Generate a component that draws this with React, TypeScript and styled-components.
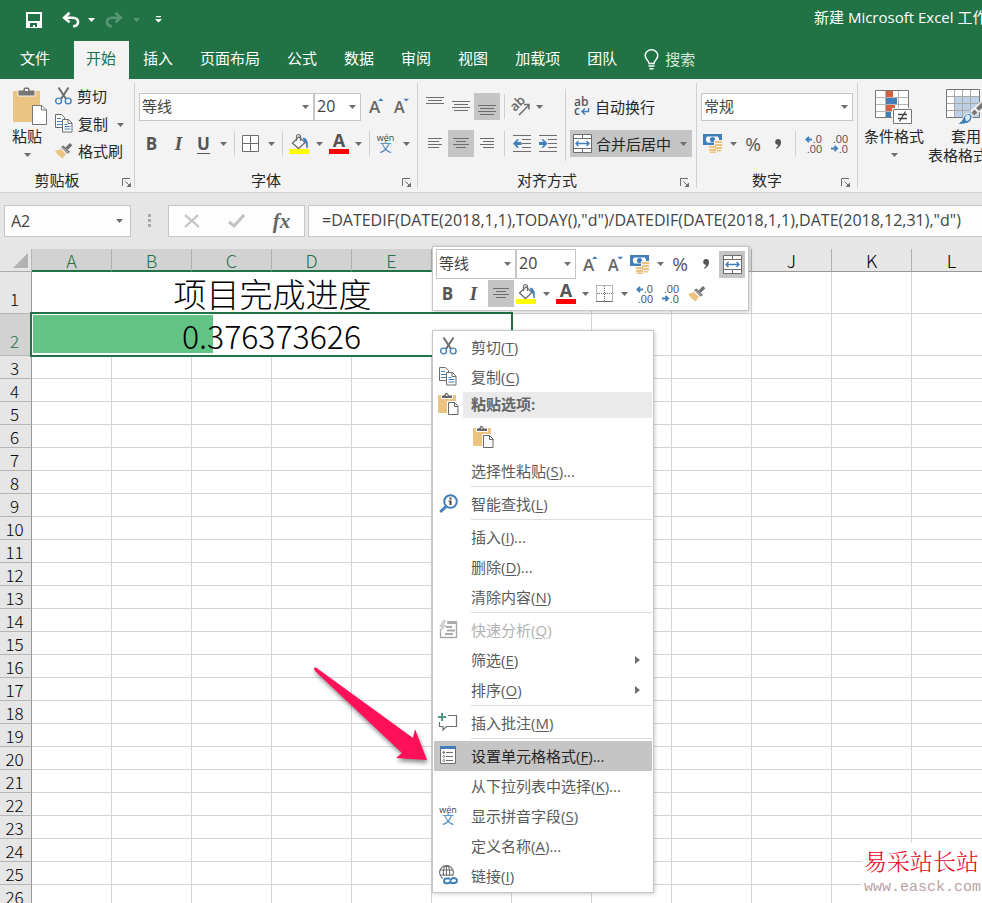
import React from 'react';
import styled, { createGlobalStyle, css } from 'styled-components';

const GREEN = '#217346';
const GREY = '#6d6d6d';
const BLUE = '#427fb9';
const TAN = '#ebc481';
const UI = '"Open Sans", "Noto Sans CJK SC", sans-serif';
const SHEET = '"Noto Sans CJK SC", "Open Sans", sans-serif';

const GlobalStyle = createGlobalStyle`
  *, *::before, *::after { box-sizing: border-box; }
  html, body, #root { height: 100%; }
  body { margin: 0; overflow: hidden; font-family: ${UI}; font-size: 15px; line-height: 20px; color: #262626; background: #fff; }
  button, input, select { font: inherit; color: inherit; margin: 0; padding: 0; border: 0; background: none; border-radius: 0; }
  button { display: inline-flex; align-items: center; justify-content: center; white-space: nowrap; }
  svg { display: block; flex: none; overflow: visible; }
`;

const Shell = styled.div`
  position: relative;
  display: flex;
  flex-direction: column;
  height: 100vh;
  overflow: hidden;
  background: #e6e6e6;
`;

/* ---------- Title bar and tabs ---------- */

const TitleBar = styled.header`
  display: flex;
  align-items: center;
  justify-content: space-between;
  height: 41px;
  flex: none;
  background: ${GREEN};
  color: #fff;
`;
const QuickAccess = styled.div`
  display: flex;
  align-items: center;
  padding: 0 0 2px 25px;
`;
const QuickButton = styled.button<{ $w: number; $dim?: boolean }>`
  width: ${p => p.$w}px;
  height: 24px;
  color: #fff;
  opacity: ${p => (p.$dim ? 0.25 : 1)};
`;
const Spacer = styled.span`
  width: 14px;
`;
const DocTitle = styled.h1`
  margin: 0;
  width: 168px;
  padding-bottom: 7px;
  font-size: 15px;
  font-weight: 400;
  line-height: 22px;
  white-space: nowrap;
  overflow: hidden;
`;
const Tabs = styled.nav`
  display: flex;
  height: 38px;
  flex: none;
  background: ${GREEN};
  color: #fff;
`;
const Tab = styled.button<{ $active?: boolean; $file?: boolean }>`
  height: 38px;
  padding: 0 13px 4px 14px;
  color: #fff;
  ${p => p.$file && css`padding: 0 24px 4px 20px;`}
  ${p => p.$active && css`padding: 0 13px 4px 12px; background: #f3f3f3; color: ${GREEN};`}
`;
const SearchTab = styled.button`
  gap: 6px;
  padding: 0 0 2px 14px;
  color: #d8e8df;
`;

/* ---------- Ribbon ---------- */

const Ribbon = styled.section`
  display: flex;
  flex: none;
  height: 114px;
  padding: 4px 0;
  background: #f3f3f3;
  border-bottom: 1px solid #d0d0d0;
  overflow: hidden;
`;
const Group = styled.div<{ $pad: number }>`
  display: flex;
  flex: none;
  flex-direction: column;
  justify-content: space-between;
  padding: 0 ${p => p.$pad}px;
  border-right: 1px solid #d0d0d0;
`;
const GroupBody = styled.div<{ $end?: number }>`
  display: flex;
  padding-right: ${p => p.$end ?? 0}px;
`;
const Stack = styled.div<{ $top?: number; $gap?: number }>`
  display: flex;
  flex-direction: column;
  gap: ${p => p.$gap ?? 0}px;
  padding-top: ${p => p.$top ?? 0}px;
`;
const Row = styled.div<{ $gap?: number; $h?: number; $left?: number }>`
  display: flex;
  align-items: center;
  gap: ${p => p.$gap ?? 0}px;
  height: ${p => p.$h ?? 27}px;
  padding-left: ${p => p.$left ?? 0}px;
`;
const GroupFooter = styled.div`
  display: flex;
  align-items: center;
  height: 20px;
  margin-bottom: -2px;
`;
const GroupLabel = styled.span`
  flex: 1;
  text-align: center;
`;
const Launcher = styled.button`
  width: 14px;
  height: 16px;
  padding: 4px 2px 0 0;
  margin-left: 6px;
`;
const Tool = styled.button<{ $w: number; $on?: boolean }>`
  width: ${p => p.$w}px;
  height: 27px;
  flex: none;
  background: ${p => (p.$on ? '#c5c5c5' : 'transparent')};
`;
const Glyph = styled.span<{ $kind: 'b' | 'i' | 'u' | 'pct' }>`
  color: #555;
  font-weight: 700;
  font-size: 17px;
  line-height: 20px;
  ${p => p.$kind === 'i' && css`font-family: "Liberation Serif", serif; font-style: italic; font-size: 19px;`}
  ${p => p.$kind === 'u' && css`text-decoration: underline; text-decoration-thickness: 1px; text-underline-offset: 3px;`}
  ${p => p.$kind === 'pct' && css`font-weight: 400; font-size: 19px;`}
`;
const Divider = styled.span<{ $m: number; $tall?: boolean }>`
  width: 1px;
  height: ${p => (p.$tall ? 72 : 25)}px;
  margin: ${p => (p.$tall ? 6 : 0)}px ${p => p.$m}px 0;
  background: #cfcfcf;
`;
const PasteButton = styled.button`
  flex-direction: column;
  justify-content: flex-start;
  width: 54px;
  height: 80px;
  padding-top: 4px;
  svg:first-child { margin-left: 6px; }
`;
const PasteLabel = styled.span`
  padding-bottom: 7px;
`;
const TextTool = styled.button<{ $on?: boolean }>`
  width: 122px;
  height: 27px;
  padding-left: 3px;
  justify-content: flex-start;
  gap: 4px;
  background: ${p => (p.$on ? '#c5c5c5' : 'transparent')};
`;
const ClipRow = styled.button`
  height: 28px;
  justify-content: flex-start;
  gap: 5px;
  padding: 0 0 2px 1px;
`;
const Caret = styled.span`
  display: inline-flex;
  align-items: center;
  justify-content: center;
  width: 16px;
`;
const ClipCaret = styled.button`
  width: 16px;
  height: 20px;
  margin-left: 4px;
`;
const BigTool = styled.button<{ $w: number }>`
  flex-direction: column;
  justify-content: flex-start;
  width: ${p => p.$w}px;
  height: 86px;
  padding-top: 6px;
  flex: none;
`;
const BigLabel = styled.span`
  display: flex;
  align-items: center;
  height: 19px;
`;
const Picture = styled.span`
  display: flex;
  height: 37px;
`;

const PickerBox = styled.label<{ $w: number; $h: number }>`
  display: grid;
  align-items: center;
  flex: none;
  width: ${p => p.$w}px;
  height: ${p => p.$h}px;
  background: #fff;
  border: 1px solid #c6c6c6;
  & > * { grid-area: 1 / 1; }
  & > svg { justify-self: end; margin-right: 4px; pointer-events: none; }
`;
const Picker = styled.select<{ $numeric: boolean }>`
  appearance: none;
  width: 100%;
  height: 100%;
  padding: 0 0 2px 2px;
  font-size: ${p => (p.$numeric ? 16 : 15)}px;
  color: #444;
`;
const Wen = styled.span`
  display: flex;
  flex-direction: column;
  align-items: center;
  font-size: 9px;
  line-height: 9px;
  color: #444;
`;
const WenHan = styled.span`
  font-size: 12px;
  line-height: 12px;
  color: ${BLUE};
`;

/* ---------- Formula bar ---------- */

const FormulaBar = styled.section`
  display: flex;
  flex: none;
  align-items: center;
  height: 56px;
  padding-left: 4px;
`;
const NameBox = styled.label`
  display: flex;
  align-items: center;
  width: 127px;
  height: 32px;
  padding: 0 7px 0 6px;
  background: #fdfdfd;
  border: 1px solid #c6c6c6;
`;
const NameInput = styled.input`
  width: 100%;
  min-width: 0;
  font-size: 16px;
  color: #444;
`;
const Dots = styled.span`
  display: flex;
  justify-content: center;
  width: 37px;
`;
const FormulaTools = styled.div`
  display: flex;
  align-items: center;
  width: 137px;
  height: 32px;
  margin-right: 3px;
  background: #fdfdfd;
  border: 1px solid #c6c6c6;
`;
const FormulaTool = styled.button`
  flex: 1;
  height: 30px;
`;
const Fx = styled.span`
  font-family: "Liberation Serif", serif;
  font-style: italic;
  font-weight: 700;
  font-size: 21px;
  color: #666;
`;
const FormulaInput = styled.input`
  flex: 1;
  min-width: 0;
  height: 32px;
  padding: 0 0 2px 13px;
  background: #fdfdfd;
  border: 1px solid #c6c6c6;
  border-right: 0;
  font-size: 16px;
  color: #444;
`;

/* ---------- Sheet ---------- */

const SheetArea = styled.main`
  flex: 1;
  min-height: 0;
  overflow: hidden;
`;
const Grid = styled.table`
  table-layout: fixed;
  width: 992px;
  border-spacing: 0;
  background: #fff;
  font-family: ${SHEET};
  font-weight: 300;
  color: #000;
`;
const Col = styled.col<{ $w: number }>`
  width: ${p => p.$w}px;
`;
const Corner = styled.td`
  height: 23px;
  padding: 0 3px 3px 0;
  background: #e6e6e6;
  border-right: 1px solid #b5b5b5;
  border-bottom: 1px solid #ababab;
  vertical-align: bottom;
  svg { margin-left: auto; }
`;
const ColHead = styled.th<{ $sel: boolean }>`
  height: 23px;
  padding: 0;
  font-size: 18px;
  font-weight: 300;
  line-height: 20px;
  background: ${p => (p.$sel ? '#d2d2d2' : '#e6e6e6')};
  color: ${p => (p.$sel ? GREEN : '#000')};
  border-right: 1px solid #b0b0b0;
  border-bottom: ${p => (p.$sel ? `2px solid ${GREEN}` : '1px solid #999')};
`;
const RowHead = styled.th<{ $sel: boolean; $tall: boolean }>`
  height: ${p => (p.$tall ? 42 : 23)}px;
  padding: 0 2px ${p => (p.$tall ? 4 : 0)}px 0;
  font-size: 17px;
  font-weight: 300;
  line-height: 20px;
  vertical-align: bottom;
  background: ${p => (p.$sel ? '#d2d2d2' : '#e6e6e6')};
  color: ${p => (p.$sel ? GREEN : '#000')};
  border-right: 1px solid #999;
  border-bottom: 1px solid #b5b5b5;
`;
const Cell = styled.td`
  padding: 0;
  border-right: 1px solid #d4d4d4;
  border-bottom: 1px solid #d4d4d4;
`;
const TitleCell = styled(Cell)`
  font-size: 33px;
  line-height: 40px;
  text-align: center;
  padding-left: 2px;
`;
const SelectedCell = styled(Cell)`
  position: relative;
  font-size: 32px;
  line-height: 40px;
  text-align: center;
  padding-top: 1px;
  &::after {
    content: '';
    position: absolute;
    inset: -2px;
    border: 2px solid ${GREEN};
  }
`;
const DataBar = styled.span`
  position: absolute;
  left: 1px;
  top: 1px;
  bottom: 2px;
  background: #63c384;
`;
const CellValue = styled.span`
  position: relative;
`;

/* ---------- Floating layers ---------- */

const floating = css`
  position: absolute;
  background: #fff;
  border: 1px solid #c6c6c6;
  box-shadow: 1px 1px 4px rgba(0, 0, 0, 0.2);
`;
const MiniToolbar = styled.div`
  ${floating}
  left: 432px;
  top: 246px;
  padding: 2px 3px;
`;
const Menu = styled.div`
  ${floating}
  left: 432px;
  top: 330px;
  width: 222px;
  padding: 1px;
`;
const MenuItem = styled.button<{ $on?: boolean; $off?: boolean }>`
  display: flex;
  justify-content: flex-start;
  width: 100%;
  height: 30px;
  color: ${p => (p.$off ? '#b1b1b1' : p.$on ? '#262626' : '#5a5a5a')};
  background: ${p => (p.$on ? '#c5c5c5' : 'transparent')};
`;
const MenuIcon = styled.span`
  display: flex;
  justify-content: center;
  flex: none;
  width: 29px;
  padding: 0 1px 2px 0;
`;
const MenuText = styled.span`
  flex: 1;
  padding-left: 8px;
  padding-bottom: 1px;
  text-align: left;
  u { text-underline-offset: 2px; text-decoration-thickness: 1px; }
`;
const MenuArrow = styled.span`
  padding-right: 12px;
`;
const MenuHeader = styled.div`
  display: flex;
  align-items: center;
  height: 26px;
`;
const MenuHeading = styled.span`
  flex: 1;
  height: 26px;
  padding-left: 8px;
  line-height: 25px;
  font-weight: 700;
  color: #666;
  background: #eaeaea;
`;
const PasteOptions = styled.div`
  display: flex;
  align-items: center;
  height: 38px;
  padding: 0 0 0 39px;
`;
const MenuRule = styled.hr`
  height: 1px;
  margin: 0 0 2px 37px;
  border: 0;
  background: #dcdcdc;
`;
const Pointer = styled.svg`
  position: absolute;
  left: 310px;
  top: 664px;
  filter: drop-shadow(1px 3px 2px rgba(0, 0, 0, 0.45));
`;
const Watermark = styled.div`
  position: absolute;
  right: 0;
  bottom: 0;
  width: 120px;
  height: 60px;
  padding: 3px 0 0 2px;
  background: #fff;
  white-space: nowrap;
  overflow: hidden;
`;
const WatermarkName = styled.div`
  font-family: "Noto Serif CJK SC", "Noto Sans CJK SC", serif;
  font-weight: 300;
  font-size: 23px;
  line-height: 30px;
  color: #e8001c;
`;
const WatermarkUrl = styled.div`
  font-family: "Liberation Mono", monospace;
  font-size: 15px;
  line-height: 24px;
  color: #b9a3a3;
`;

/* ---------- Icons ---------- */

const Down = ({ c = GREY }: { c?: string }) => (
  <svg width="7" height="4" viewBox="0 0 7 4"><path d="M0 0h7L3.5 4z" fill={c} /></svg>
);

const SaveIcon = () => (
  <svg width="16" height="16" viewBox="0 0 16 16">
    <path d="M0 0h16v16H0z" fill="#fff" /><path d="M2 2h12v7H2z" fill={GREEN} />
    <path d="M4 11h7v4H9v-2H7v2H4z" fill={GREEN} />
  </svg>
);
const UndoIcon = ({ flip }: { flip?: boolean }) => (
  <svg width="18" height="16" viewBox="0 0 18 16" fill="none" stroke="#fff" strokeWidth="2.600">
    <g transform={flip ? 'translate(18 0) scale(-1 1)' : undefined}>
      <path d="M7.500 .8L2.200 5.700l5.300 4.500" /><path d="M2.500 5.700h8.200c7.200 0 7 8.600 .4 8.600" />
    </g>
  </svg>
);
const CustomizeIcon = () => (
  <svg width="7" height="7" viewBox="0 0 7 7" fill="#fff"><path d="M1 0h5v1.200H1zM0 3h7L3.500 6.500z" /></svg>
);
const BulbIcon = () => (
  <svg width="15" height="21" viewBox="0 0 15 21" fill="none" stroke="#fff" strokeWidth="1.500">
    <path d="M5 14.500c0-3-3.800-4-3.800-8a6.300 5.700 0 0 1 12.600 0c0 4-3.800 5-3.800 8z" /><path d="M4.500 17h6M5.500 19.800h4" />
  </svg>
);
const LauncherIcon = () => (
  <svg width="9" height="9" viewBox="0 0 9 9" fill="none" stroke={GREY}>
    <path d="M.5 8V.5H8M3.500 3.500L8 8" /><path d="M9 4.500V9H4.500z" fill={GREY} stroke="none" />
  </svg>
);
const PasteIcon = ({ big }: { big?: boolean }) => (
  <svg width={big ? 35 : 21} height={big ? 39 : 22} viewBox={big ? '0 0 35 39' : '0 0 21 22'}>
    {big ? (
      <>
        <path d="M1 4h26v31H0V5a1 1 0 0 1 1-1z" fill={TAN} />
        <path d="M5 3h5V2a2 2 0 0 1 2-2h3a2 2 0 0 1 2 2v1h5v6H5z" fill="#777" stroke="#f3f3f3" /><path d="M12 2h3v2h-3z" fill="#fff" />
        <path d="M19.500 18.500H29l4.500 4.500v14.500h-14z" fill="#fff" stroke="#777" /><path d="M28.500 18.500V23h5" fill="none" stroke="#777" />
      </>
    ) : (
      <>
        <path d="M1 2h17v18H1a1 1 0 0 1-1-1V3a1 1 0 0 1 1-1z" fill={TAN} />
        <path d="M3.500 2H6a2.500 2.500 0 0 1 5 0h3.500v3.500h-11z" fill="#666" stroke="#fff" /><path d="M8 1.500h1.500V3H8z" fill="#fff" />
        <path d="M9 8h12v14H9z" fill="#fff" /><path d="M10.500 9.500h6l3.500 3.500v8.500h-9.500z" fill="#fff" stroke="#666" /><path d="M16.500 9.500v4H20" fill="none" stroke="#666" />
      </>
    )}
  </svg>
);
const CutIcon = () => (
  <svg width="17" height="18" viewBox="0 0 17 18" fill="none">
    <path d="M3.500 .5l7.500 11.500M13.500 .5L6 12" stroke={GREY} strokeWidth="2" />
    <ellipse cx="3.600" cy="14" rx="2.900" ry="2.900" stroke={BLUE} strokeWidth="1.400" /><ellipse cx="13.200" cy="14" rx="2.900" ry="2.900" stroke={BLUE} strokeWidth="1.400" />
  </svg>
);
const CopyIcon = () => (
  <svg width="18" height="19" viewBox="0 0 18 19" stroke={GREY} fill="#fff">
    <path d="M.5 .5h6l3 3v10h-9z" /><path d="M2 4.500h4M2 7.500h5M2 10.500h5" stroke={BLUE} />
    <path d="M7.500 5.500h6l3.500 3.500v9H7.500z" /><path d="M13 5.500v4h4" fill="none" /><path d="M9.500 10.500h3M9.500 12.500h6M9.500 15h6" stroke={BLUE} />
  </svg>
);
const BrushIcon = () => (
  <svg width="18" height="16" viewBox="0 0 18 16">
    <path d="M0 8l6-2 5 5-3.500 4.500L3 12z" fill={TAN} /><path d="M6 4l2.500-1.500L15 9l-2.500 1.800z" fill="#707070" />
    <path d="M10.500 4.500L15 0l2.300 2.300-4.500 4.500z" fill="#707070" /><path d="M8 4.500l5 5" stroke="#f3f3f3" strokeWidth=".7" />
  </svg>
);
const BordersIcon = ({ dotted }: { dotted?: boolean }) => (
  <svg width="17" height="17" viewBox="0 0 17 17" fill="#fff" stroke={GREY} strokeDasharray={dotted ? '1 1' : undefined}>
    <path d="M.5 .5h16v16H.5zM8.500 1v15M1 8.500h15" />
    {dotted && <path d="M0 16.500h17" strokeDasharray="none" />}
  </svg>
);
const FillIcon = () => (
  <svg width="20" height="20" viewBox="0 0 20 20" fill="none">
    <path d="M0 15h20v5H0z" fill="#ff0" />
    <path d="M3.500 9L10 2.800l6 5.700-6.500 6z" fill="#fff" stroke={GREY} strokeWidth="1.300" />
    <path d="M7.500 7V2.500a2 2 0 0 1 4 0V7" stroke={GREY} strokeWidth="1.200" />
    <path d="M13.500 3.500c4 .5 6 3 5.300 10.500h-1.500c.2-3-.5-5-1.500-5.500z" fill={BLUE} />
  </svg>
);
const FontColorIcon = () => (
  <svg width="20" height="20" viewBox="0 0 20 20">
    <path d="M0 15h20v5H0z" fill="red" />
    <text x="10" y="13" textAnchor="middle" fontFamily="Open Sans" fontWeight="700" fontSize="18" fill="#555">A</text>
  </svg>
);
const SizeIcon = ({ up }: { up?: boolean }) => (
  <svg width="15" height="17" viewBox="0 0 15 17">
    <text x="0" y="15" fontFamily="Open Sans" fontWeight="600" fontSize={up ? 17 : 16} fill="#666">A</text>
    <path d={up ? 'M9 3h5.500L11.800 .3z' : 'M9.500 .8H15l-2.700 2.700z'} fill={BLUE} />
  </svg>
);
/* Each line is [x, width, y] inside a 27px tall button. */
const LINES: Record<string, number[][]> = {
  top: [[0, 18, 4], [2, 14, 7], [0, 18, 10]],
  middle: [[0, 18, 8], [2, 14, 11], [0, 18, 14], [2, 14, 17]],
  bottom: [[0, 18, 12], [2, 14, 15], [0, 18, 18], [2, 14, 21]],
  left: [[2, 14, 8], [2, 11, 11], [2, 14, 14], [2, 11, 17]],
  center: [[1, 16, 8], [4, 10, 11], [1, 16, 14], [4, 10, 17]],
  right: [[2, 14, 8], [5, 11, 11], [2, 14, 14], [5, 11, 17]],
};
const LinesIcon = ({ kind }: { kind: string }) => (
  <svg width="18" height="27" viewBox="0 0 18 27" fill={GREY}>
    {LINES[kind].map(([x, w, y]) => <rect key={y} x={x} y={y} width={w} height="1" />)}
  </svg>
);
const OrientIcon = () => (
  <svg width="20" height="18" viewBox="0 0 20 18">
    <text transform="translate(5 14) rotate(-45)" fontFamily="Open Sans" fontWeight="600" fontSize="13" fill="#666">ab</text>
    <path d="M9 17L18.500 7.500M14 6.500h5v5" fill="none" stroke={GREY} strokeWidth="1.500" />
  </svg>
);
const IndentIcon = ({ out }: { out?: boolean }) => (
  <svg width="18" height="17" viewBox="0 0 18 17">
    <path d="M0 .5h18M9 4.500h9M9 8.500h9M9 12.500h9M0 16.500h18" stroke={GREY} />
    <path d={out ? 'M0 8.500l4-4.300h2L4 7h4.500v3H4l2 2.800H4z' : 'M8.500 8.500l-4-4.300h-2L4.500 7H0v3h4.500l-2 2.800h2z'} fill={BLUE} />
  </svg>
);
const WrapIcon = () => (
  <svg width="18" height="19" viewBox="0 0 18 19" fontFamily="Open Sans" fontWeight="600" fontSize="12" fill="#555">
    <text x="1" y="9">ab</text><text x="1" y="18">c</text>
    <path d="M15.500 11v3.500H9.500M12 11.500l-3 3 3 3" fill="none" stroke={BLUE} strokeWidth="1.500" />
  </svg>
);
const MergeIcon = () => (
  <svg width="19" height="19" viewBox="0 0 19 19" fill="#fff" stroke={GREY}>
    <path d="M.5 .5h18v18H.5zM.5 4.500h18M.5 14.500h18M9.500 .5v4M9.500 14.500v4" />
    <path d="M3 9.500h13M5.500 7L3 9.500 5.500 12M13.500 7L16 9.500 13.500 12" fill="none" stroke={BLUE} strokeWidth="1.400" />
  </svg>
);
const CurrencyIcon = () => (
  <svg width="20" height="19" viewBox="0 0 20 19">
    <path d="M0 0h19v11H0z" fill={BLUE} /><path d="M3 2.500h13v6H3z" fill="#fff" /><circle cx="9.500" cy="5.500" r="2.600" fill={BLUE} />
    <path d="M2 2h2v1.500H2zM15 2h2v1.500h-2zM2 7.500h2V9H2z" fill={BLUE} />
    <path d="M11 6h9v10h-9zM5 11h9v8H5z" fill="#f6f2ea" />
    <path d="M12 7h7v2h-7zM12 10h7v2h-7zM12 13h7v2h-7zM6 12h7v2H6zM6 15h7v2H6zM7 17.500h6V19H7zM14 16h4v1.500h-4z" fill={TAN} />
  </svg>
);
const DecimalIcon = ({ less }: { less?: boolean }) => (
  <svg width="17" height="18" viewBox="0 0 17 18" fontFamily="Liberation Sans" fontSize="11" fill="#555">
    <text x="17" y="8" textAnchor="end">{less ? '.00' : '.0'}</text>
    <text x="17" y="17.500" textAnchor="end">{less ? '.0' : '.00'}</text>
    {less
      ? <path d="M0 13.500h6M3.500 10.800L6.200 13.500l-2.700 2.700" fill="none" stroke={BLUE} strokeWidth="1.800" />
      : <path d="M7 4.500H1.500M4 1.800L1.300 4.500 4 7.200" fill="none" stroke={BLUE} strokeWidth="1.800" />}
  </svg>
);
const CondIcon = () => (
  <svg width="38" height="36" viewBox="0 0 38 36">
    <path d="M.5 1.500h33v27H.5z" fill="#fff" stroke="#777" />
    <path d="M1 8.500h32M1 15.500h32M1 22.500h32M10.500 2v26M23.500 2v26" stroke="#b5b5b5" fill="none" />
    <path d="M11 2h7v6h-7zM11 16h9v6h-9z" fill="#d9603f" /><path d="M11 9h11v6H11zM11 23h5v5h-5z" fill={BLUE} />
    <path d="M17 19h21v17H17z" fill="#f3f3f3" /><path d="M18.500 20.500h18v14h-18z" fill="#fff" stroke="#777" />
    <path d="M23 25.500h9M23 29.500h9M30.500 22.500l-6 10" stroke="#444" fill="none" strokeWidth="1.300" />
  </svg>
);
const TableStyleIcon = () => (
  <svg width="40" height="36" viewBox="0 0 40 36">
    <path d="M.5 .5h33v28H.5z" fill="#fff" stroke="#777" /><path d="M9 8h24v20H9z" fill="#bdd0e8" />
    <path d="M1 7.500h32M1 14.500h32M1 21.500h32M8.500 1v27M16.500 1v27M24.500 1v27" stroke="#a9a9a9" fill="none" />
    <path d="M40 8L24 22l5 5L40 17z" fill="#f3f3f3" /><path d="M40 9.500L30 19l3 3 7-7z" fill="#777" /><path d="M28.500 20.500l-3 3 3 3 3-3z" fill="#777" />
    <path d="M10 35c5-1 6-4 8-8 3-4 9-3 8 2-1 6-9 7-16 6z" fill={BLUE} stroke="#fff" /><path d="M19 28c1-3 6-3 5 1-1 3-3 3-4 3z" fill="#dce7f3" />
  </svg>
);
const LookupIcon = () => (
  <svg width="19" height="19" viewBox="0 0 19 19" fill="none">
    <circle cx="11.500" cy="7.500" r="6.300" stroke={BLUE} strokeWidth="2" /><path d="M7 12.500L1.200 18" stroke={BLUE} strokeWidth="2.800" />
    <path d="M10.500 3.500h2v2h-2zM9.500 6.500h3v4.500h-2V7.500h-1z" fill="#444" />
  </svg>
);
const QuickIcon = () => (
  <svg width="19" height="19" viewBox="0 0 19 19">
    <path d="M1.500 9v8.500h16V2H8" fill="none" stroke="#a9a9a9" strokeWidth="1.400" /><path d="M9 1h9v3H8z" fill="#a9a9a9" />
    <path d="M7 7h6M8 10.500h8M6 14h8" stroke="#a9a9a9" strokeWidth="2.200" /><path d="M4 0h3.500L5 5h3L1 12l1.500-5H0z" fill="#d0d0d0" />
  </svg>
);
const CommentIcon = () => (
  <svg width="20" height="18" viewBox="0 0 20 18" fill="none">
    <path d="M1.500 9v4.500H5V17l3.500-3.500h10V2.500H10" stroke={GREY} strokeWidth="1.200" /><path d="M4 0v8M0 4h8" stroke="#4f9a80" strokeWidth="2" />
  </svg>
);
const FormatIcon = () => (
  <svg width="16" height="18" viewBox="0 0 16 18">
    <path d="M.5 1h15v16.500H.5z" fill="#fff" stroke={GREY} /><path d="M0 0h16v3H0z" fill={BLUE} />
    <path d="M6 6.500h7M6 10.500h7M6 14.500h7" stroke={GREY} />
    <circle cx="3.800" cy="6.500" r="1.200" fill={GREY} /><circle cx="3.800" cy="10.500" r="1" fill="#fff" stroke={GREY} strokeWidth=".8" /><circle cx="3.800" cy="14.500" r="1" fill="#fff" stroke={GREY} strokeWidth=".8" />
  </svg>
);
const LinkIcon = () => (
  <svg width="19" height="20" viewBox="0 0 19 20" fill="none">
    <g stroke={GREY} strokeWidth="1.100"><circle cx="7.500" cy="7.500" r="6.900" /><ellipse cx="7.500" cy="7.500" rx="3.200" ry="6.900" /><path d="M1 5h13M1 10h13M7.500 1v13" /></g>
    <path d="M4 11h15v9H4z" fill="#fff" />
    <g stroke={BLUE} strokeWidth="2"><path d="M11 13.500H7.500a2.300 2.300 0 0 0 0 4.800h2.300l2-2.300M11.500 18h4a2.300 2.300 0 0 0 0-4.800h-2.300l-2 2.300" /></g>
  </svg>
);
const CommaIcon = () => (
  <svg width="6" height="10" viewBox="0 0 6 10"><path d="M3 0c2 0 3 1.300 3 3 0 3-1.500 5.500-4.500 6.700L.8 8.900C2.400 8 3 7 3 5.700 1.200 5.700 .2 4.600 .2 2.900 .2 1.200 1.400 0 3 0z" fill="#555" /></svg>
);
const WenIcon = () => <Wen>wén<WenHan>文</WenHan></Wen>;

const DropCaret = () => <Caret><Down /></Caret>;

const Choice = ({ label, value, w, h }: { label: string; value: string; w: number; h: number }) => (
  <PickerBox $w={w} $h={h}>
    <Picker aria-label={label} $numeric={/^\d+$/.test(value)}><option>{value}</option></Picker>
    <Down />
  </PickerBox>
);

const Footer = ({ label }: { label: string }) => (
  <GroupFooter><GroupLabel>{label}</GroupLabel><Launcher aria-label={`${label}设置`}><LauncherIcon /></Launcher></GroupFooter>
);

/* ---------- Data ---------- */

const TABS = ['插入', '页面布局', '公式', '数据', '审阅', '视图', '加载项', '团队'];
const COLUMNS = 'ABCDEFGHIJKL'.split('');
const MERGED = 6;
const PROGRESS = 0.376373626;

type Entry = { text: string; k: string; more?: boolean; icon?: React.ReactNode; on?: boolean; off?: boolean; sub?: boolean; rule?: boolean };
const ENTRIES_TOP: Entry[] = [
  { text: '剪切', k: 'T', icon: <CutIcon /> },
  { text: '复制', k: 'C', icon: <CopyIcon /> },
];
const ENTRIES: Entry[] = [
  { text: '选择性粘贴', k: 'S', more: true, rule: true },
  { text: '智能查找', k: 'L', icon: <LookupIcon />, rule: true },
  { text: '插入', k: 'I', more: true },
  { text: '删除', k: 'D', more: true },
  { text: '清除内容', k: 'N', rule: true },
  { text: '快速分析', k: 'Q', icon: <QuickIcon />, off: true },
  { text: '筛选', k: 'E', sub: true },
  { text: '排序', k: 'O', sub: true, rule: true },
  { text: '插入批注', k: 'M', icon: <CommentIcon />, rule: true },
  { text: '设置单元格格式', k: 'F', more: true, icon: <FormatIcon />, on: true },
  { text: '从下拉列表中选择', k: 'K', more: true },
  { text: '显示拼音字段', k: 'S', icon: <WenIcon /> },
  { text: '定义名称', k: 'A', more: true },
  { text: '链接', k: 'I', icon: <LinkIcon /> },
];

const MenuEntry = ({ e }: { e: Entry }) => (
  <>
    <MenuItem role="menuitem" $on={e.on} $off={e.off} disabled={e.off}>
      <MenuIcon>{e.icon}</MenuIcon>
      <MenuText>{e.text}(<u>{e.k}</u>){e.more && '...'}</MenuText>
      {e.sub && <MenuArrow><svg width="5" height="8" viewBox="0 0 5 8"><path d="M0 0l5 4-5 4z" fill={GREY} /></svg></MenuArrow>}
    </MenuItem>
    {e.rule && <MenuRule />}
  </>
);

export default function App() {
  return (
    <Shell>
      <GlobalStyle />
      <TitleBar>
        <QuickAccess>
          <QuickButton $w={18} aria-label="保存"><SaveIcon /></QuickButton>
          <Spacer />
          <QuickButton $w={28} aria-label="撤消"><UndoIcon /></QuickButton>
          <QuickButton $w={13} aria-label="撤消选项"><Down c="#fff" /></QuickButton>
          <QuickButton $w={32} $dim aria-label="恢复"><UndoIcon flip /></QuickButton>
          <QuickButton $w={12} $dim aria-label="恢复选项"><Down c="#fff" /></QuickButton>
          <QuickButton $w={32} aria-label="自定义快速访问工具栏"><CustomizeIcon /></QuickButton>
        </QuickAccess>
        <DocTitle>新建 Microsoft Excel 工作表</DocTitle>
      </TitleBar>
      <Tabs>
        <Tab $file>文件</Tab>
        <Tab $active>开始</Tab>
        {TABS.map(t => <Tab key={t}>{t}</Tab>)}
        <SearchTab><BulbIcon />搜索</SearchTab>
      </Tabs>

      <Ribbon>
        <Group $pad={0}>
          <GroupBody $end={6}>
            <PasteButton><PasteIcon big /><PasteLabel>粘贴</PasteLabel><Down /></PasteButton>
            <Stack>
              <ClipRow><CutIcon />剪切</ClipRow>
              <Row><ClipRow><CopyIcon />复制</ClipRow><ClipCaret aria-label="复制选项"><Down /></ClipCaret></Row>
              <ClipRow><BrushIcon />格式刷</ClipRow>
            </Stack>
          </GroupBody>
          <Footer label="剪贴板" />
        </Group>

        <Group $pad={3}>
          <Stack $top={10} $gap={10}>
            <Row $left={1}>
              <Choice label="字体" value="等线" w={175} h={28} />
              <Choice label="字号" value="20" w={47} h={28} />
              <Row $left={3}>
                <Tool $w={25} aria-label="增大字号"><SizeIcon up /></Tool>
                <Tool $w={25} aria-label="减小字号"><SizeIcon /></Tool>
              </Row>
            </Row>
            <Row>
              <Tool $w={27}><Glyph $kind="b">B</Glyph></Tool>
              <Tool $w={27}><Glyph $kind="i">I</Glyph></Tool>
              <Tool $w={23}><Glyph $kind="u">U</Glyph></Tool>
              <DropCaret />
              <Divider $m={3} />
              <Tool $w={25} aria-label="边框"><BordersIcon /></Tool>
              <DropCaret />
              <Divider $m={3} />
              <Tool $w={25} aria-label="填充颜色"><FillIcon /></Tool>
              <DropCaret />
              <Tool $w={23} aria-label="字体颜色"><FontColorIcon /></Tool>
              <DropCaret />
              <Divider $m={3} />
              <Tool $w={25} aria-label="拼音"><WenIcon /></Tool>
              <DropCaret />
            </Row>
          </Stack>
          <Footer label="字体" />
        </Group>

        <Group $pad={4}>
          <GroupBody>
            <Stack $top={10} $gap={10}>
              <Row>
                <Tool $w={26} aria-label="顶端对齐"><LinesIcon kind="top" /></Tool>
                <Tool $w={26} aria-label="垂直居中"><LinesIcon kind="middle" /></Tool>
                <Tool $w={26} $on aria-label="底端对齐"><LinesIcon kind="bottom" /></Tool>
                <Divider $m={4} />
                <Tool $w={22} aria-label="方向"><OrientIcon /></Tool>
                <DropCaret />
              </Row>
              <Row>
                <Tool $w={26} aria-label="左对齐"><LinesIcon kind="left" /></Tool>
                <Tool $w={26} $on aria-label="居中"><LinesIcon kind="center" /></Tool>
                <Tool $w={26} aria-label="右对齐"><LinesIcon kind="right" /></Tool>
                <Divider $m={4} />
                <Tool $w={26} aria-label="减少缩进量"><IndentIcon out /></Tool>
                <Tool $w={26} aria-label="增加缩进量"><IndentIcon /></Tool>
              </Row>
            </Stack>
            <Divider $m={4} $tall />
            <Stack $top={10} $gap={10}>
              <Row><TextTool><WrapIcon />自动换行</TextTool></Row>
              <Row><TextTool $on><MergeIcon />合并后居中<DropCaret /></TextTool></Row>
            </Stack>
          </GroupBody>
          <Footer label="对齐方式" />
        </Group>

        <Group $pad={4}>
          <Stack $top={10} $gap={10}>
            <Row><Choice label="数字格式" value="常规" w={152} h={28} /></Row>
            <Row>
              <Tool $w={24} aria-label="会计数字格式"><CurrencyIcon /></Tool>
              <DropCaret />
              <Tool $w={24}><Glyph $kind="pct">%</Glyph></Tool>
              <Tool $w={26} aria-label="千位分隔样式"><CommaIcon /></Tool>
              <Divider $m={4} />
              <Tool $w={26} aria-label="增加小数位数"><DecimalIcon /></Tool>
              <Tool $w={26} aria-label="减少小数位数"><DecimalIcon less /></Tool>
            </Row>
          </Stack>
          <Footer label="数字" />
        </Group>

        <GroupBody>
          <BigTool $w={72}>
            <Picture><CondIcon /></Picture>
            <BigLabel>条件格式</BigLabel>
            <BigLabel><Down /></BigLabel>
          </BigTool>
          <BigTool $w={72}>
            <Picture><TableStyleIcon /></Picture>
            <BigLabel>套用</BigLabel>
            <BigLabel>表格格式<Caret><Down /></Caret></BigLabel>
          </BigTool>
        </GroupBody>
      </Ribbon>

      <FormulaBar>
        <NameBox><NameInput aria-label="名称框" defaultValue="A2" /><Down /></NameBox>
        <Dots>
          <svg width="4" height="14" viewBox="0 0 4 14" fill="#a8a8a8"><path d="M0 0h3v3H0zM0 5h3v3H0zM0 10h3v3H0z" /></svg>
        </Dots>
        <FormulaTools>
          <FormulaTool aria-label="取消"><svg width="16" height="14" viewBox="0 0 16 14"><path d="M1 1l14 12M14 1L1 13" stroke="#c3c3c3" strokeWidth="2.200" /></svg></FormulaTool>
          <FormulaTool aria-label="输入"><svg width="17" height="14" viewBox="0 0 17 14"><path d="M1 8l5 4L16 1" fill="none" stroke="#c3c3c3" strokeWidth="3" /></svg></FormulaTool>
          <FormulaTool aria-label="插入函数"><Fx>fx</Fx></FormulaTool>
        </FormulaTools>
        <FormulaInput aria-label="编辑栏" defaultValue={'=DATEDIF(DATE(2018,1,1),TODAY(),"d")/DATEDIF(DATE(2018,1,1),DATE(2018,12,31),"d")'} />
      </FormulaBar>

      <SheetArea>
        <Grid>
          <colgroup><Col $w={32} />{COLUMNS.map(c => <Col key={c} $w={80} />)}</colgroup>
          <thead>
            <tr>
              <Corner><svg width="15" height="15" viewBox="0 0 15 15"><path d="M15 0v15H0z" fill="#b2b2b2" /></svg></Corner>
              {COLUMNS.map((c, i) => <ColHead key={c} scope="col" $sel={i < MERGED}>{c}</ColHead>)}
            </tr>
          </thead>
          <tbody>
            {Array.from({ length: 26 }, (_, i) => i + 1).map(n => (
              <tr key={n}>
                <RowHead scope="row" $sel={n === 2} $tall={n < 3}>{n}</RowHead>
                {n === 1 && <TitleCell colSpan={MERGED}>项目完成进度</TitleCell>}
                {n === 2 && (
                  <SelectedCell colSpan={MERGED}>
                    <DataBar style={{ width: `${PROGRESS * 100}%` }} />
                    <CellValue>{PROGRESS}</CellValue>
                  </SelectedCell>
                )}
                {COLUMNS.slice(n < 3 ? MERGED : 0).map(c => <Cell key={c} />)}
              </tr>
            ))}
          </tbody>
        </Grid>
      </SheetArea>

      <MiniToolbar role="toolbar">
        <Row $h={30}>
          <Choice label="浮动字体" value="等线" w={80} h={30} />
          <Choice label="浮动字号" value="20" w={60} h={30} />
          <Row $left={2}>
            <Tool $w={25} aria-label="增大字号"><SizeIcon up /></Tool>
            <Tool $w={25} aria-label="减小字号"><SizeIcon /></Tool>
          </Row>
          <Tool $w={24} aria-label="会计数字格式"><CurrencyIcon /></Tool>
          <DropCaret />
          <Tool $w={24}><Glyph $kind="pct">%</Glyph></Tool>
          <Tool $w={27} aria-label="千位分隔样式"><CommaIcon /></Tool>
          <Tool $w={26} $on aria-label="合并后居中"><MergeIcon /></Tool>
        </Row>
        <Row $h={29}>
          <Tool $w={23}><Glyph $kind="b">B</Glyph></Tool>
          <Tool $w={29}><Glyph $kind="i">I</Glyph></Tool>
          <Tool $w={26} $on aria-label="居中"><LinesIcon kind="center" /></Tool>
          <Tool $w={24} aria-label="填充颜色"><FillIcon /></Tool>
          <DropCaret />
          <Tool $w={23} aria-label="字体颜色"><FontColorIcon /></Tool>
          <DropCaret />
          <Tool $w={23} aria-label="边框"><BordersIcon dotted /></Tool>
          <DropCaret />
          <Tool $w={25} aria-label="增加小数位数"><DecimalIcon /></Tool>
          <Tool $w={26} aria-label="减少小数位数"><DecimalIcon less /></Tool>
          <Tool $w={28} aria-label="格式刷"><BrushIcon /></Tool>
        </Row>
      </MiniToolbar>

      <Menu role="menu">
        {ENTRIES_TOP.map(e => <MenuEntry key={e.k} e={e} />)}
        <MenuHeader><MenuIcon><PasteIcon /></MenuIcon><MenuHeading>粘贴选项:</MenuHeading></MenuHeader>
        <PasteOptions><button aria-label="粘贴"><PasteIcon /></button></PasteOptions>
        {ENTRIES.map(e => <MenuEntry key={e.text} e={e} />)}
      </Menu>

      <Pointer width="124" height="104" viewBox="0 0 124 104">
        <path d="M4 5c0-2 2-2 4 0l95 69 2-9 12 31-31-2 6-5L5 7z" fill="#ff1058" />
      </Pointer>

      <Watermark>
        <WatermarkName>易采站长站</WatermarkName>
        <WatermarkUrl>www.easck.com</WatermarkUrl>
      </Watermark>
    </Shell>
  );
}
